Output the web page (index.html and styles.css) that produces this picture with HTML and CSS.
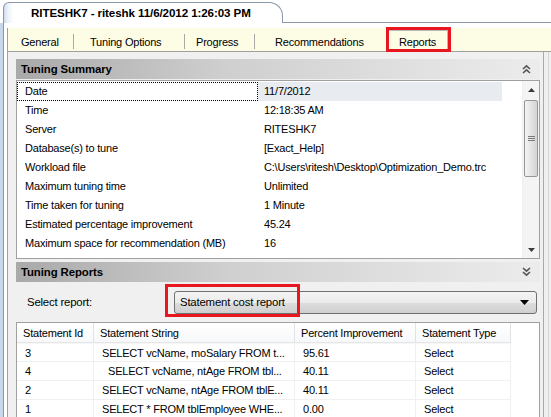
FILE: index.html
```html
<!DOCTYPE html>
<html>
<head>
<meta charset="utf-8">
<link rel="stylesheet" href="styles.css">
</head>
<body>
<div class="titlebar">
  <div class="doctab"><span class="doctab-title">RITESHK7 - riteshk 11/6/2012 1:26:03 PM</span></div>
  <div class="titlebar-rest"></div>
</div>
<div class="main">
  <div class="edge"></div>
  <div class="doc">
    <div class="tabctl">
      <div class="tabstrip">
        <div class="tab t-general">General</div>
        <span class="sep"></span>
        <div class="tab t-tuning">Tuning Options</div>
        <span class="sep"></span>
        <div class="tab t-progress">Progress</div>
        <span class="sep"></span>
        <div class="tab t-rec">Recommendations</div>
        <div class="tab t-reports active">Reports</div>
      </div>
      <div class="content">
        <div class="panel">
          <div class="section-head">
            <span>Tuning Summary</span>
            <svg class="chev" width="9" height="10" viewBox="0 0 9 10"><path d="M1 5 L4.5 1.8 L8 5 M1 9 L4.5 5.8 L8 9" stroke="#555" stroke-width="1.6" fill="none"/></svg>
          </div>
          <div class="propgrid">
            <div class="prop-rows">
              <div class="prow"><div class="pk selected">Date</div><div class="pv"><span class="pv-hl">11/7/2012</span></div></div>
              <div class="prow"><div class="pk">Time</div><div class="pv">12:18:35 AM</div></div>
              <div class="prow"><div class="pk">Server</div><div class="pv">RITESHK7</div></div>
              <div class="prow"><div class="pk">Database(s) to tune</div><div class="pv">[Exact_Help]</div></div>
              <div class="prow"><div class="pk">Workload file</div><div class="pv">C:\Users\ritesh\Desktop\Optimization_Demo.trc</div></div>
              <div class="prow"><div class="pk">Maximum tuning time</div><div class="pv">Unlimited</div></div>
              <div class="prow"><div class="pk">Time taken for tuning</div><div class="pv">1 Minute</div></div>
              <div class="prow"><div class="pk">Estimated percentage improvement</div><div class="pv">45.24</div></div>
              <div class="prow"><div class="pk">Maximum space for recommendation (MB)</div><div class="pv">16</div></div>
            </div>
            <div class="vscroll">
              <div class="sb-btn"><svg width="7" height="4" viewBox="0 0 7 4"><path d="M0 4 L3.5 0 L7 4Z" fill="#3c3c3c"/></svg></div>
              <div class="sb-track">
                <div class="sb-thumb">
                  <svg width="7" height="5" viewBox="0 0 7 5"><path d="M0 0.5H7M0 2.5H7M0 4.5H7" stroke="#7a7a7a" stroke-width="1"/></svg>
                </div>
              </div>
              <div class="sb-btn"><svg width="7" height="4" viewBox="0 0 7 4"><path d="M0 0 L3.5 4 L7 0Z" fill="#3c3c3c"/></svg></div>
            </div>
          </div>
          <div class="section-head reports-head">
            <span>Tuning Reports</span>
            <svg class="chev" width="9" height="10" viewBox="0 0 9 10"><path d="M1 1 L4.5 4.2 L8 1 M1 5 L4.5 8.2 L8 5" stroke="#555" stroke-width="1.6" fill="none"/></svg>
          </div>
          <div class="select-row">
            <span class="select-label">Select report:</span>
            <div class="combo">
              <span>Statement cost report</span>
              <svg width="9" height="5" viewBox="0 0 9 5"><path d="M0 0 L9 0 L4.5 5Z" fill="#000"/></svg>
            </div>
            <div class="redbox"></div>
          </div>
          <div class="report-table">
            <div class="trow thead">
              <div class="c c1">Statement Id</div>
              <div class="c c2">Statement String</div>
              <div class="c c3">Percent Improvement</div>
              <div class="c c4">Statement Type</div>
            </div>
            <div class="trow">
              <div class="c c1">3</div>
              <div class="c c2">SELECT vcName, moSalary FROM t...</div>
              <div class="c c3">95.61</div>
              <div class="c c4">Select</div>
            </div>
            <div class="trow">
              <div class="c c1">4</div>
              <div class="c c2 indent">SELECT vcName, ntAge FROM tbl...</div>
              <div class="c c3">40.11</div>
              <div class="c c4">Select</div>
            </div>
            <div class="trow">
              <div class="c c1">2</div>
              <div class="c c2">SELECT vcName, ntAge FROM tblE...</div>
              <div class="c c3">40.11</div>
              <div class="c c4">Select</div>
            </div>
            <div class="trow">
              <div class="c c1">1</div>
              <div class="c c2">SELECT * FROM tblEmployee WHE...</div>
              <div class="c c3">0.00</div>
              <div class="c c4">Select</div>
            </div>
          </div>
        </div>
        <div class="side"><div class="side-inner"></div></div>
      </div>
    </div>
  </div>
</div>
</body>
</html>
```

FILE: styles.css
```css
* { box-sizing: border-box; }
html, body {
  margin: 0;
  padding: 0;
}
body {
  width: 551px;
  height: 417px;
  overflow: hidden;
  background: #ffffff;
  font-family: "Liberation Sans", Arial, sans-serif;
  font-size: 11px;
  letter-spacing: -0.2px;
  color: #000;
}

/* ---------- document tab title ---------- */
.titlebar {
  display: flex;
  align-items: flex-end;
  height: 23px;
}
.doctab {
  margin-left: 3px;
  width: 280px;
  height: 21px;
  border: 1px solid #8b98aa;
  border-bottom: none;
  border-radius: 6px 14px 0 0;
  background: linear-gradient(to right, #cfdcee 0, #eef3fa 4px, #ffffff 10px);
  padding-left: 27px;
  padding-top: 3px;
}
.doctab-title {
  font-weight: bold;
  font-size: 11.6px;
  letter-spacing: -0.1px;
}
.titlebar-rest {
  flex: 1;
  height: 1px;
  background: #8b98aa;
}

/* ---------- main frame ---------- */
.main {
  display: flex;
  height: 394px;
}
.edge {
  width: 3px;
  background: #c8d7eb;
}
.doc {
  flex: 1;
  border-left: 1px solid #8b98aa;
  background: #ffffff;
  padding: 5px 0 0 3px;
  display: flex;
}
.tabctl {
  flex: 1;
  border-left: 1px solid #a0a0a0;
  display: flex;
  flex-direction: column;
}
.tabstrip {
  height: 24px;
  background: #fdfde6;
  border-bottom: 1px solid #a0a0a0;
  display: flex;
  align-items: center;
}
.tab {
  height: 23px;
  line-height: 21px;
  padding-top: 4px;
}
.t-general { width: 65px; padding-left: 13px; }
.t-tuning { width: 110px; padding-left: 16px; }
.t-progress { width: 69px; padding-left: 11px; }
.t-rec { width: 134px; padding-left: 20px; }
.t-reports {
  width: 59px;
  padding-left: 10px;
  align-self: flex-start;
  margin-top: 2px;
  height: 19px;
  line-height: 17px;
  padding-top: 3px;
  border-top: 1px solid #b8b8b8;
  border-right: 1px solid #b8b8b8;
  outline: 3px solid #e8161f;
}
.sep {
  width: 1px;
  height: 15px;
  background: #a8a8a8;
  margin-top: 3px;
}

/* ---------- content ---------- */
.content {
  flex: 1;
  display: flex;
}
.panel {
  flex: 1;
  background: #f0f0f0;
  padding: 7px 3px 0 8px;
  display: flex;
  flex-direction: column;
}
.side {
  width: 8px;
  border-left: 1px solid #a9a9a9;
  background: #f0f0f0;
  padding-left: 4px;
}
.side-inner {
  height: 100%;
  border-left: 1px solid #d6d6d6;
}

.section-head {
  height: 20px;
  background: linear-gradient(to right, #a9a9a9 0%, #cfcfcf 40%, #ececec 100%);
  display: flex;
  align-items: center;
  justify-content: space-between;
  padding: 0 9px 0 5px;
  font-weight: bold;
  font-size: 11.4px;
  letter-spacing: -0.1px;
}
.chev { display: block; }

.propgrid {
  margin-top: 1px;
  height: 179px;
  border: 1px solid #a0a0a0;
  background: #ffffff;
  display: flex;
}
.prop-rows {
  flex: 1;
  display: flex;
  flex-direction: column;
  padding-top: 1px;
}
.prow {
  height: 19px;
  display: flex;
  align-items: stretch;
}
.pk {
  width: 241px;
  padding-left: 8px;
  line-height: 19px;
  white-space: nowrap;
}
.pk.selected {
  border: 1px dotted #000;
  line-height: 17px;
  padding-left: 7px;
}
.pv {
  flex: 1;
  padding-left: 0;
  line-height: 19px;
  white-space: nowrap;
  text-indent: 6px;
}
.pv-hl {
  display: block;
  width: 244px;
  background: #e8ebf0;
}

.vscroll {
  width: 17px;
  display: flex;
  flex-direction: column;
  background: #f4f4f4;
  border-left: 1px solid #f0f0f0;
}
.sb-btn {
  height: 17px;
  display: flex;
  align-items: center;
  justify-content: center;
}
.sb-track {
  flex: 1;
  padding: 2px 1px 0 1px;
}
.sb-thumb {
  height: 77px;
  border: 1px solid #979797;
  border-radius: 2px;
  background: linear-gradient(to right, #f4f4f4, #e4e4e4 50%, #d4d4d4);
  display: flex;
  align-items: center;
  justify-content: center;
}

.reports-head { margin-top: 3px; }

.select-row {
  position: relative;
  height: 40px;
  display: flex;
  align-items: center;
  padding-left: 11px;
}
.select-label {
  width: 147px;
  font-size: 11.4px;
}
.combo {
  width: 363px;
  height: 23px;
  border: 1px solid #707070;
  border-radius: 3px;
  background: linear-gradient(to bottom, #f3f3f3 0%, #ebebeb 50%, #dddddd 51%, #cfcfcf 100%);
  display: flex;
  align-items: center;
  justify-content: space-between;
  padding: 0 7px 0 5px;
  font-size: 11.4px;
}
.redbox {
  position: absolute;
  left: 149px;
  top: 2px;
  width: 135px;
  height: 33px;
  border: 3px solid #e8161f;
}

.report-table {
  margin-top: 0;
  flex: 1;
  border: 1px solid #a0a0a0;
  border-bottom: none;
  background: #ffffff;
  display: flex;
  flex-direction: column;
}
.trow {
  display: flex;
  height: 19px;
}
.c {
  height: 19px;
  line-height: 18px;
  border-right: 1px solid #f0f0f0;
  border-bottom: 1px solid #f0f0f0;
  padding-left: 8px;
  white-space: nowrap;
  overflow: hidden;
}
.c1 { width: 77px; }
.c2 { width: 201px; }
.c3 { width: 121px; }
.c4 { width: 95px; }
.c2.indent { padding-left: 14px; }
.thead .c {
  padding-left: 6px;
  border-right: 1px solid #e3e3e3;
  border-bottom: 1px solid #e6e6e6;
  background: linear-gradient(to bottom, #ffffff, #f7f8fa);
  height: 20px;
  line-height: 20px;
}
.thead { height: 20px; }
.thead + .trow .c { border-top: 1px solid #f6f6f6; }
```
